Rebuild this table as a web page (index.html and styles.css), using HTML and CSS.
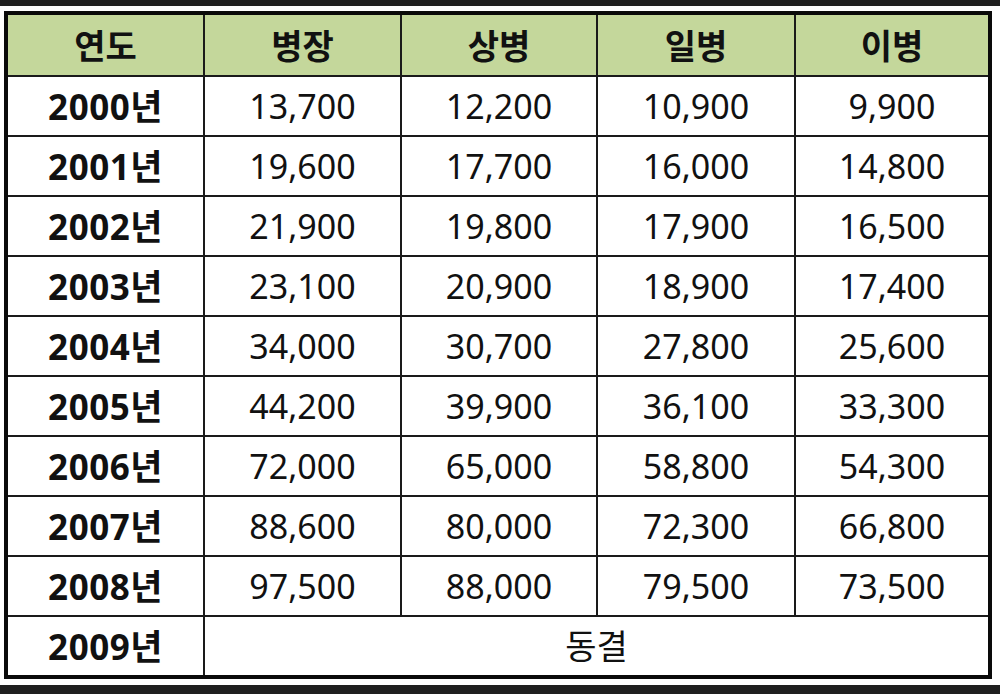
FILE: index.html
```html
<!DOCTYPE html>
<html lang="ko">
<head>
<meta charset="utf-8">
<title>연도별 봉급</title>
<link rel="stylesheet" href="styles.css">
</head>
<body>
<div class="band band-top"></div>
<div class="sheet">
<table class="pay">
<colgroup>
<col class="c1"><col class="c2"><col class="c3"><col class="c4"><col class="c5">
</colgroup>
<thead>
<tr><th>연도</th><th>병장</th><th>상병</th><th>일병</th><th>이병</th></tr>
</thead>
<tbody>
<tr><th>2000년</th><td>13,700</td><td>12,200</td><td>10,900</td><td>9,900</td></tr>
<tr><th>2001년</th><td>19,600</td><td>17,700</td><td>16,000</td><td>14,800</td></tr>
<tr><th>2002년</th><td>21,900</td><td>19,800</td><td>17,900</td><td>16,500</td></tr>
<tr><th>2003년</th><td>23,100</td><td>20,900</td><td>18,900</td><td>17,400</td></tr>
<tr><th>2004년</th><td>34,000</td><td>30,700</td><td>27,800</td><td>25,600</td></tr>
<tr><th>2005년</th><td>44,200</td><td>39,900</td><td>36,100</td><td>33,300</td></tr>
<tr><th>2006년</th><td>72,000</td><td>65,000</td><td>58,800</td><td>54,300</td></tr>
<tr><th>2007년</th><td>88,600</td><td>80,000</td><td>72,300</td><td>66,800</td></tr>
<tr><th>2008년</th><td>97,500</td><td>88,000</td><td>79,500</td><td>73,500</td></tr>
<tr><th>2009년</th><td colspan="4">동결</td></tr>
</tbody>
</table>
</div>
<div class="band band-bottom"></div>
</body>
</html>
```
FILE: styles.css
```css
html, body {
  margin: 0;
  padding: 0;
  background: #ffffff;
  width: 1000px;
  height: 694px;
  overflow: hidden;
}
body {
  display: flex;
  flex-direction: column;
  font-family: "Noto Sans", "Noto Sans CJK KR", sans-serif;
  color: #111;
}
.band {
  background: #1f1f1f;
}
.band-top {
  height: 6px;
}
.band-bottom {
  flex: 1;
}
.sheet {
  padding: 5px 8px 6px 4px;
}
.pay {
  border-collapse: collapse;
  table-layout: fixed;
  width: 988px;
  border: 4px solid #0a0a0a;
}
.c1 { width: 198px; }
.c2 { width: 197px; }
.c3 { width: 196px; }
.c4 { width: 198px; }
.c5 { width: 195px; }
.pay th, .pay td {
  border: 2px solid #1a1a1a;
  text-align: center;
  vertical-align: middle;
  padding: 0;
  font-size: 34px;
  line-height: 1;
}
.pay thead th {
  background: #c4d79b;
  height: 60px;
  font-weight: 700;
  font-family: "Noto Sans CJK KR", sans-serif;
}
.pay tbody tr {
  height: 60px;
}
.pay tbody tr:last-child {
  height: 61px;
}
.pay tbody th {
  font-weight: 700;
  font-size: 35px;
  letter-spacing: 0.5px;
}
.pay tbody td {
  font-weight: 400;
}
```
